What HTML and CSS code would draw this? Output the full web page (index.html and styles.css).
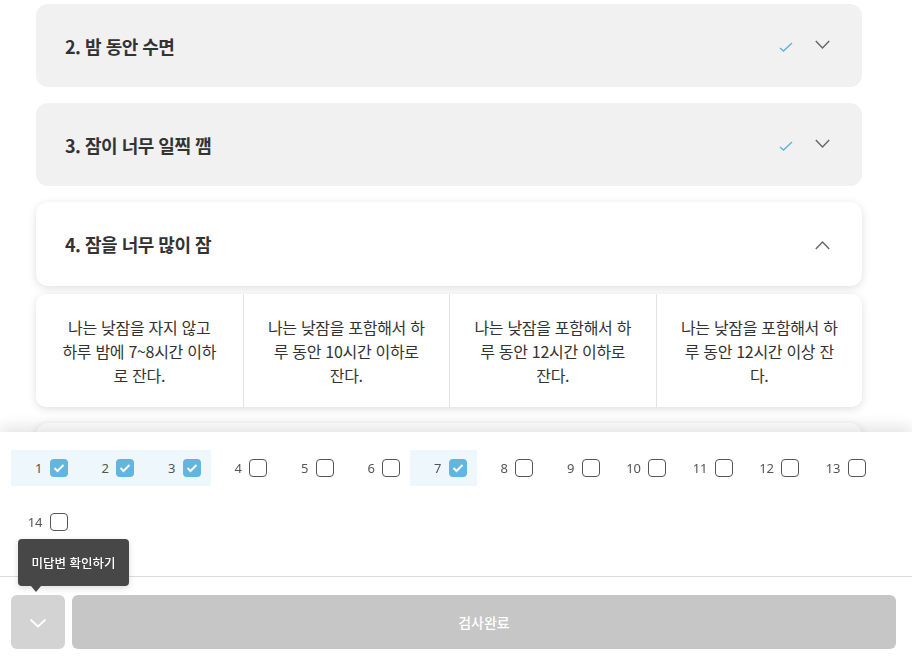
FILE: index.html
```html
<!DOCTYPE html>
<html lang="ko">

<head>
    <meta charset="UTF-8">
    <meta name="viewport" content="width=device-width, initial-scale=1.0">
    <title>수면 검사</title>
    <link rel="stylesheet" href="styles.css">
</head>

<body>
    <div class="survey">
        <!-- 2번 문항 -->
        <div class="question">
            <span class="q-title">2. 밤 동안 수면</span>
            <div class="q-icons">
                <svg class="q-check" width="14" height="10" viewBox="0 0 14 10"><path d="M1 6 L4.5 9 L13 1" fill="none" stroke="#5bb3e0" stroke-width="1.4"/></svg>
                <svg class="q-arrow" width="15" height="9" viewBox="0 0 15 9"><path d="M0.8 1 L7.5 8 L14.2 1" fill="none" stroke="#666" stroke-width="1.4"/></svg>
            </div>
        </div>

        <!-- 3번 문항 -->
        <div class="question">
            <span class="q-title">3. 잠이 너무 일찍 깸</span>
            <div class="q-icons">
                <svg class="q-check" width="14" height="10" viewBox="0 0 14 10"><path d="M1 6 L4.5 9 L13 1" fill="none" stroke="#5bb3e0" stroke-width="1.4"/></svg>
                <svg class="q-arrow" width="15" height="9" viewBox="0 0 15 9"><path d="M0.8 1 L7.5 8 L14.2 1" fill="none" stroke="#666" stroke-width="1.4"/></svg>
            </div>
        </div>

        <!-- 4번 문항 (열림) -->
        <div class="question open">
            <span class="q-title">4. 잠을 너무 많이 잠</span>
            <div class="q-icons">
                <svg class="q-arrow up" width="15" height="9" viewBox="0 0 15 9"><path d="M0.8 8 L7.5 1 L14.2 8" fill="none" stroke="#666" stroke-width="1.4"/></svg>
            </div>
        </div>
        <div class="options">
            <div class="option">나는 낮잠을 자지 않고 하루 밤에 7~8시간 이하로 잔다.</div>
            <div class="option">나는 낮잠을 포함해서 하루 동안 10시간 이하로 잔다.</div>
            <div class="option">나는 낮잠을 포함해서 하루 동안 12시간 이하로 잔다.</div>
            <div class="option">나는 낮잠을 포함해서 하루 동안 12시간 이상 잔다.</div>
        </div>

        <div class="question open">
            <span class="q-title">5. 식욕 감소</span>
        </div>
    </div>

    <!-- 하단 답변 패널 -->
    <div class="answer-panel">
        <div class="check-list">
            <div class="check-item done"><span>1</span><span class="box checked"><svg width="12" height="10" viewBox="0 0 12 10"><path d="M1.5 5 L4.5 8 L10.5 2" fill="none" stroke="#fff" stroke-width="2"/></svg></span></div>
            <div class="check-item done"><span>2</span><span class="box checked"><svg width="12" height="10" viewBox="0 0 12 10"><path d="M1.5 5 L4.5 8 L10.5 2" fill="none" stroke="#fff" stroke-width="2"/></svg></span></div>
            <div class="check-item done"><span>3</span><span class="box checked"><svg width="12" height="10" viewBox="0 0 12 10"><path d="M1.5 5 L4.5 8 L10.5 2" fill="none" stroke="#fff" stroke-width="2"/></svg></span></div>
            <div class="check-item"><span>4</span><span class="box"></span></div>
            <div class="check-item"><span>5</span><span class="box"></span></div>
            <div class="check-item"><span>6</span><span class="box"></span></div>
            <div class="check-item done"><span>7</span><span class="box checked"><svg width="12" height="10" viewBox="0 0 12 10"><path d="M1.5 5 L4.5 8 L10.5 2" fill="none" stroke="#fff" stroke-width="2"/></svg></span></div>
            <div class="check-item"><span>8</span><span class="box"></span></div>
            <div class="check-item"><span>9</span><span class="box"></span></div>
            <div class="check-item"><span>10</span><span class="box"></span></div>
            <div class="check-item"><span>11</span><span class="box"></span></div>
            <div class="check-item"><span>12</span><span class="box"></span></div>
            <div class="check-item"><span>13</span><span class="box"></span></div>
            <div class="check-item"><span>14</span><span class="box"></span></div>
        </div>

        <div class="divider"></div>

        <div class="buttons">
            <button type="button" class="btn-toggle">
                <svg width="18" height="10" viewBox="0 0 18 10"><path d="M1.5 1.5 L9 8.5 L16.5 1.5" fill="none" stroke="#fff" stroke-width="1.8"/></svg>
            </button>
            <button type="button" class="btn-finish">검사완료</button>
        </div>

        <!-- 툴팁 -->
        <div class="tooltip">미답변 확인하기</div>
    </div>
</body>

</html>
```

FILE: styles.css
```css
body {
    font-family: 'Noto Sans CJK KR', 'Noto Sans', sans-serif;
    margin: 0;
    padding: 0;
    background-color: #fff;
    color: #333;
    overflow: hidden;
}

.survey {
    padding: 4px 50px 240px 36px;
}

.question {
    display: flex;
    align-items: center;
    justify-content: space-between;
    height: 83px;
    padding: 0 32px 0 29px;
    margin-bottom: 16px;
    background-color: #f1f1f1;
    border-radius: 12px;
    box-sizing: border-box;
}

.question.open {
    height: 84px;
    margin-bottom: 8px;
    background-color: #fff;
    box-shadow: 0 2px 8px rgba(0, 0, 0, 0.13);
}

.q-title {
    font-size: 18px;
    font-weight: bold;
    letter-spacing: -0.5px;
    color: #333;
}

.q-icons {
    display: flex;
    align-items: center;
    gap: 22px;
}

.q-check {
    margin-top: 3px;
}

.q-arrow {
    margin-top: -3px;
}

.q-arrow.up {
    margin-top: 2px;
}

.options {
    display: grid;
    grid-template-columns: repeat(4, 1fr);
    margin-bottom: 16px;
    background-color: #fff;
    border-radius: 10px;
    box-shadow: 0 2px 8px rgba(0, 0, 0, 0.13);
}

.option {
    padding: 21px 24px 20px;
    font-size: 16px;
    line-height: 24px;
    text-align: center;
    color: #333;
    letter-spacing: -0.3px;
    border-left: 1px solid #e3e3e3;
}

.option:first-child {
    border-left: none;
}

.answer-panel {
    position: fixed;
    left: 0;
    right: 0;
    bottom: 0;
    height: 229px;
    background-color: #fff;
    box-shadow: 0 -6px 14px rgba(0, 0, 0, 0.1);
}

.check-list {
    display: flex;
    flex-wrap: wrap;
    row-gap: 18px;
    padding: 18px 11px 0;
}

.check-item {
    display: flex;
    align-items: center;
    justify-content: flex-end;
    gap: 7px;
    width: 66.5px;
    height: 36px;
    padding-right: 10px;
    box-sizing: border-box;
    font-family: 'Noto Sans', sans-serif;
    font-size: 13px;
    color: #555;
}

.check-item.done {
    background-color: #eef7fb;
}

.box {
    display: flex;
    align-items: center;
    justify-content: center;
    width: 18px;
    height: 18px;
    border: 1.5px solid #555;
    border-radius: 4px;
    box-sizing: border-box;
}

.box.checked {
    background-color: #62b5de;
    border: none;
}

.divider {
    height: 1px;
    margin-top: 36px;
    background-color: #dcdcdc;
}

.buttons {
    display: flex;
    gap: 7px;
    padding: 18px 16px 0 11px;
}

.btn-toggle {
    display: flex;
    align-items: center;
    justify-content: center;
    width: 54px;
    height: 54px;
    border: none;
    border-radius: 6px;
    background-color: #d3d3d3;
    padding: 0;
}

.btn-toggle svg {
    margin-top: 2px;
}

.btn-finish {
    flex: 1;
    height: 54px;
    border: none;
    border-radius: 6px;
    background-color: #c6c6c6;
    color: #fff;
    font-family: 'Noto Sans CJK KR', sans-serif;
    font-size: 14px;
    font-weight: 500;
}

.tooltip {
    position: absolute;
    left: 18px;
    top: 107px;
    width: 111px;
    height: 47px;
    line-height: 47px;
    text-align: center;
    background-color: #474747;
    color: #fff;
    font-size: 12.5px;
    font-weight: 500;
    border-radius: 4px;
    box-shadow: 0 2px 6px rgba(0, 0, 0, 0.15);
}

.tooltip::after {
    content: '';
    position: absolute;
    left: 13px;
    bottom: -6px;
    border-left: 5px solid transparent;
    border-right: 5px solid transparent;
    border-top: 6px solid #474747;
}
```
